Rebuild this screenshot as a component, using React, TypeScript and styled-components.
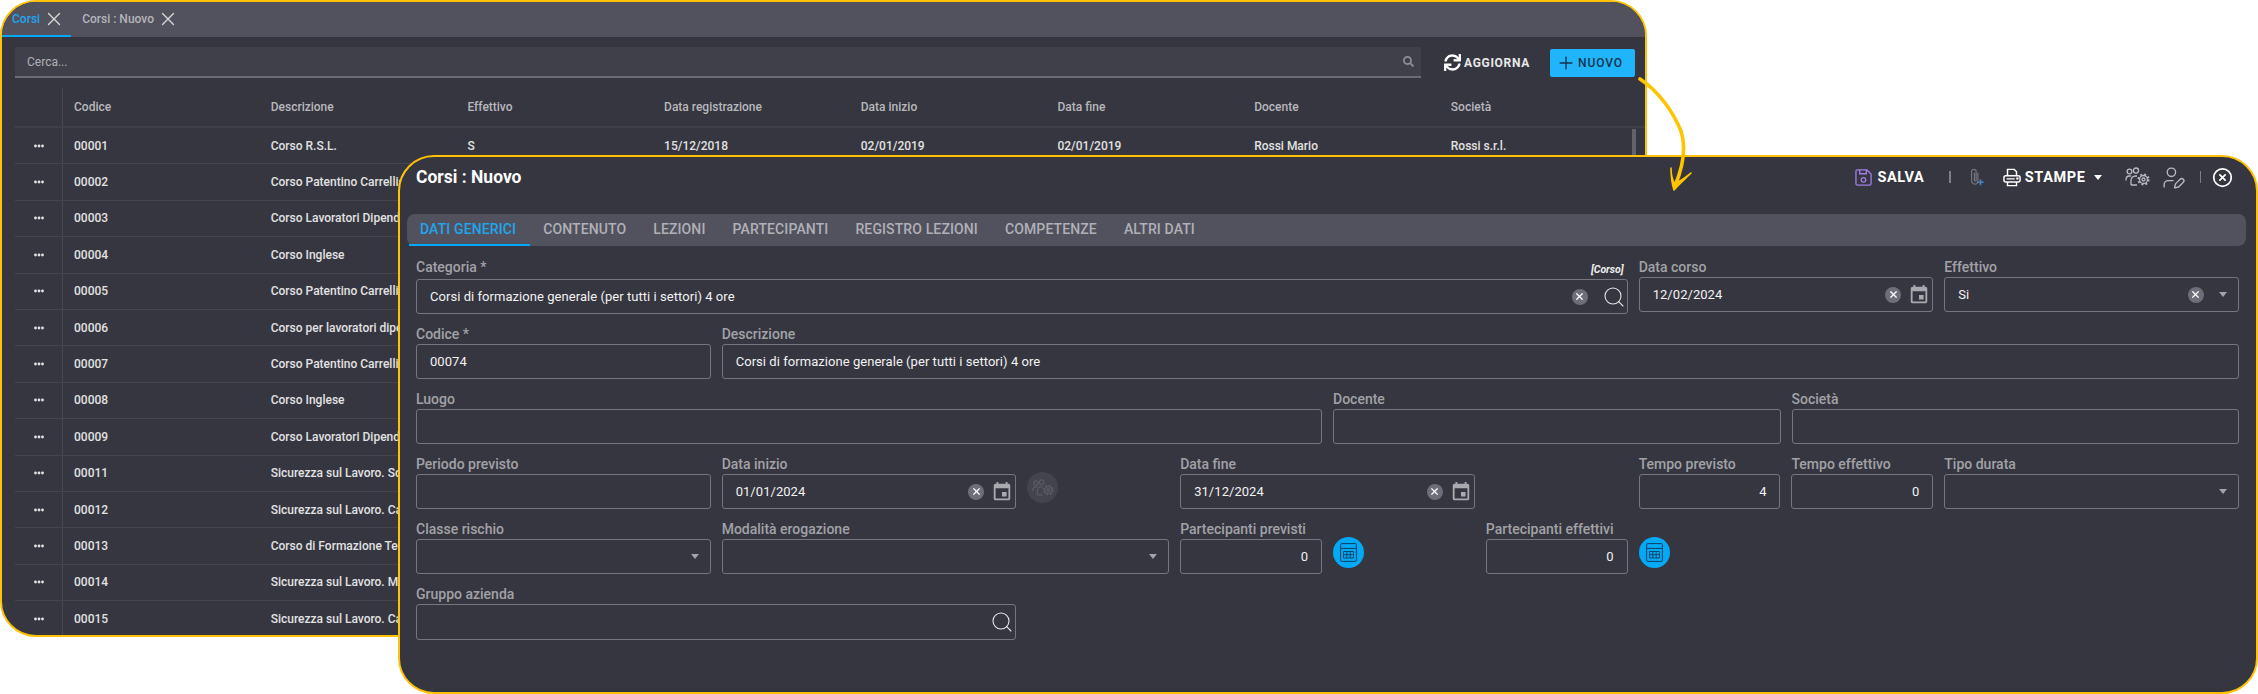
import React from 'react'
import styled, { createGlobalStyle } from 'styled-components'
import { Search, X, UserPen, CircleX, Plus } from 'lucide-react'
import { FaSync, FaSearch } from 'react-icons/fa'
import { MdEvent } from 'react-icons/md'

const Global = createGlobalStyle`
  html, body { margin: 0; padding: 0; background: #fff; }
  body { font-family: Roboto, "Liberation Sans", sans-serif; }
`

const columns = ['Codice', 'Descrizione', 'Effettivo', 'Data registrazione', 'Data inizio', 'Data fine', 'Docente', 'Società']

const firstRow = ['00001', 'Corso R.S.L.', 'S', '15/12/2018', '02/01/2019', '02/01/2019', 'Rossi Mario', 'Rossi s.r.l.']

// the form window covers these rows, only the start of each description shows
const rows = [
  ['00002', 'Corso Patentino Carrellis'],
  ['00003', 'Corso Lavoratori Dipende'],
  ['00004', 'Corso Inglese'],
  ['00005', 'Corso Patentino Carrellis'],
  ['00006', 'Corso per lavoratori dipe'],
  ['00007', 'Corso Patentino Carrellis'],
  ['00008', 'Corso Inglese'],
  ['00009', 'Corso Lavoratori Dipende'],
  ['00011', 'Sicurezza sul Lavoro. Sc'],
  ['00012', 'Sicurezza sul Lavoro. Ca'],
  ['00013', 'Corso di Formazione Tec'],
  ['00014', 'Sicurezza sul Lavoro. Mo'],
  ['00015', 'Sicurezza sul Lavoro. Ca'],
]

const formTabs = ['DATI GENERICI', 'CONTENUTO', 'LEZIONI', 'PARTECIPANTI', 'REGISTRO LEZIONI', 'COMPETENZE', 'ALTRI DATI']

const Dots = () => (
  <svg width="10" height="4" viewBox="0 0 10 4">
    <circle cx="1.5" cy="2" r="1.4" fill="#e4e4e4" />
    <circle cx="5" cy="2" r="1.4" fill="#e4e4e4" />
    <circle cx="8.5" cy="2" r="1.4" fill="#e4e4e4" />
  </svg>
)

const FloppyIcon = () => (
  <svg width="17" height="17" viewBox="0 0 18 18" fill="none" stroke="#a07ee6" strokeWidth="1.4">
    <path d="M2.5 1h10.2L17 5.3v10.2a1.5 1.5 0 0 1-1.5 1.5h-13A1.5 1.5 0 0 1 1 15.5v-13A1.5 1.5 0 0 1 2.5 1z" />
    <path d="M5 1v4h7V1" />
    <circle cx="9" cy="11.5" r="2.4" />
  </svg>
)

const ClipIcon = () => (
  <svg width="14" height="18" viewBox="0 0 16 20" fill="none" strokeWidth="1.4">
    <path stroke="#74747c" d="M9 5v9.5a3.6 3.6 0 0 1-7.2 0V3.8a2.6 2.6 0 0 1 5.2 0v10a1 1 0 0 1-2 0V5" />
    <path stroke="#4a86c0" strokeWidth="1.7" d="M8.5 16h7M12 12.5v7" />
  </svg>
)

const PrinterIcon = () => (
  <svg width="18" height="19" viewBox="0 0 20 20" fill="none" stroke="#fff" strokeWidth="1.6">
    <path d="M5 8V1h7.5L15 3.5V8" />
    <rect x="1" y="8" width="18" height="7" rx="2.2" />
    <path d="M5 15v4h10v-4M4 11.5h9" />
    <circle cx="16" cy="11" r=".6" fill="#fff" />
  </svg>
)

const TeamGearIcon = ({ color = '#b9b9bf', size = 25 }: { color?: string; size?: number }) => (
  <svg width={size} height={size * 0.8} viewBox="0 0 25 20" fill="none" stroke={color} strokeWidth="1.3">
    <circle cx="4.5" cy="4.5" r="2.4" />
    <path d="M1 13.5v-1.2A3.4 3.4 0 0 1 4.4 9h1.8" />
    <circle cx="11" cy="3.6" r="2.6" />
    <path d="M6 18v-4.5a4.5 4.5 0 0 1 4.5-4.5H12M6 18h6" />
    <circle cx="18.5" cy="12.5" r="4" />
    <circle cx="18.5" cy="12.5" r="5.2" strokeWidth="1.8" strokeDasharray="1.9 2.2" />
    <circle cx="18.5" cy="12.5" r="1.5" />
  </svg>
)

const CalcIcon = () => (
  <svg width="17" height="19" viewBox="0 0 17 19" fill="none" stroke="#0b3f63" strokeWidth="1">
    <rect x=".6" y=".6" width="15.8" height="17.8" rx="1.2" />
    <path d="M.6 5.4h15.8" />
    <path strokeWidth=".9" d="M3.5 8.5h10v6.5h-10zM3.5 11.7h10M6.8 8.5v6.5M10.2 8.5v6.5" />
  </svg>
)

const ArrowDrawing = () => (
  <Arrow width="70" height="125" viewBox="0 0 70 125" fill="none">
    <path d="M2 3C22 16 36 38 43 55C48 70 46 88 37 110" stroke="#ffc400" strokeWidth="3.6" strokeLinecap="round" />
    <path d="M33 92C33 98 34 104 37 108C42 105 48 101 53 97C47 103 41 108 36 114C34 108 33 100 33 92Z" fill="#ffc400" stroke="#ffc400" strokeWidth="1.6" strokeLinejoin="round" />
  </Arrow>
)

type FieldProps = {
  label: string
  value?: string
  start: number
  span: number
  kind?: 'date' | 'select' | 'search'
  clear?: boolean
  numeric?: boolean
  tag?: string
  tall?: boolean
}

const Field = ({ label, value, start, span, kind, clear, numeric, tag, tall }: FieldProps) => (
  <FieldWrap $start={start} $span={span}>
    <LabelRow $tall={!!tag}>
      <Label>{label}</Label>
      {tag && <Tag>{tag}</Tag>}
    </LabelRow>
    <InputBox $kind={kind} $tall={tall}>
      <Value $numeric={numeric}>{value}</Value>
      {clear && (
        <Clear $kind={kind}>
          <X size={11} strokeWidth={2.6} color="#fff" />
        </Clear>
      )}
      {kind === 'date' && <MdEvent size={22} color="#a9a9ae" />}
      {kind === 'select' && <Caret />}
      {kind === 'search' && <Search size={24} strokeWidth={1.1} color="#e6e6e6" />}
    </InputBox>
  </FieldWrap>
)

export default function App() {
  return (
    <Page>
      <Global />
      <BackWindow>
        <TabStrip>
          <WindowTab $active>
            Corsi
            <X size={22} strokeWidth={1.5} color="#d8d8d8" />
          </WindowTab>
          <WindowTab>
            Corsi : Nuovo
            <X size={22} strokeWidth={1.5} color="#d8d8d8" />
          </WindowTab>
        </TabStrip>
        <Toolbar>
          <SearchBar>
            Cerca...
            <FaSearch size={11} color="#8e8e94" />
          </SearchBar>
          <RefreshButton>
            <FaSync size={17} color="#fff" />
            AGGIORNA
          </RefreshButton>
          <NewButton>
            <Plus size={20} strokeWidth={1.7} color="#12344d" />
            NUOVO
          </NewButton>
        </Toolbar>
        <Table>
          <Scrollbar />
          <HeadRow>
            <MenuCell />
            {columns.map(c => (
              <HeadCell key={c}>{c}</HeadCell>
            ))}
          </HeadRow>
          <Row>
            <MenuCell>
              <Dots />
            </MenuCell>
            {firstRow.map((c, i) => (
              <Cell key={i}>{c}</Cell>
            ))}
          </Row>
          {rows.map(r => (
            <Row key={r[0]}>
              <MenuCell>
                <Dots />
              </MenuCell>
              <Cell>{r[0]}</Cell>
              <Cell>{r[1]}</Cell>
            </Row>
          ))}
        </Table>
      </BackWindow>

      <FrontWindow>
        <Header>
          <Title>Corsi : Nuovo</Title>
          <Actions>
            <ActionText>
              <FloppyIcon />
              SALVA
            </ActionText>
            <Divider $space={25} />
            <IconSlot $space={19}>
              <ClipIcon />
            </IconSlot>
            <ActionText $space={19} $tight>
              <PrinterIcon />
              STAMPE
            </ActionText>
            <HeadCaret />
            <IconSlot $space={23}>
              <TeamGearIcon />
            </IconSlot>
            <IconSlot $space={11}>
              <UserPen size={25} strokeWidth={1.3} color="#b9b9bf" />
            </IconSlot>
            <Divider $space={14} />
            <IconSlot $space={11}>
              <CircleX size={21} strokeWidth={2} color="#fff" />
            </IconSlot>
          </Actions>
        </Header>

        <FormTabs>
          {formTabs.map((t, i) => (
            <FormTab key={t} $active={i === 0}>
              {t}
            </FormTab>
          ))}
        </FormTabs>

        <Form>
          <FormRow>
            <Field label="Categoria *" tag="[Corso]" value="Corsi di formazione generale (per tutti i settori) 4 ore" start={1} span={8} kind="search" clear />
            <Field label="Data corso" value="12/02/2024" start={9} span={2} kind="date" clear />
            <Field label="Effettivo" value="Si" start={11} span={2} kind="select" clear />
          </FormRow>
          <FormRow>
            <Field label="Codice *" value="00074" start={1} span={2} />
            <Field label="Descrizione" value="Corsi di formazione generale (per tutti i settori) 4 ore" start={3} span={10} />
          </FormRow>
          <FormRow>
            <Field label="Luogo" start={1} span={6} />
            <Field label="Docente" start={7} span={3} />
            <Field label="Società" start={10} span={3} />
          </FormRow>
          <FormRow>
            <Field label="Periodo previsto" start={1} span={2} />
            <Field label="Data inizio" value="01/01/2024" start={3} span={2} kind="date" clear />
            <RoundButton $start={5} $disabled>
              <TeamGearIcon color="#5c5c66" size={22} />
            </RoundButton>
            <Field label="Data fine" value="31/12/2024" start={6} span={2} kind="date" clear />
            <Field label="Tempo previsto" value="4" start={9} span={1} numeric />
            <Field label="Tempo effettivo" value="0" start={10} span={1} numeric />
            <Field label="Tipo durata" start={11} span={2} kind="select" />
          </FormRow>
          <FormRow>
            <Field label="Classe rischio" start={1} span={2} kind="select" />
            <Field label="Modalità erogazione" start={3} span={3} kind="select" />
            <Field label="Partecipanti previsti" value="0" start={6} span={1} numeric />
            <RoundButton $start={7}>
              <CalcIcon />
            </RoundButton>
            <Field label="Partecipanti effettivi" value="0" start={8} span={1} numeric />
            <RoundButton $start={9}>
              <CalcIcon />
            </RoundButton>
          </FormRow>
          <FormRow>
            <Field label="Gruppo azienda" start={1} span={4} kind="search" tall />
          </FormRow>
        </Form>
      </FrontWindow>
      <ArrowDrawing />
    </Page>
  )
}

const Page = styled.div`
  position: relative;
  width: 2258px;
  height: 694px;
  overflow: hidden;
  background: #fff;
`

const BackWindow = styled.div`
  position: absolute;
  left: 0;
  top: 0;
  width: 1647px;
  height: 637px;
  box-sizing: border-box;
  border: 2px solid #ffc107;
  border-radius: 36px;
  background: #363640;
  overflow: hidden;
  display: flex;
  flex-direction: column;
`

const TabStrip = styled.div`
  height: 35px;
  flex: none;
  display: flex;
  background: #52525f;
`

const WindowTab = styled.div<{ $active?: boolean }>`
  display: flex;
  align-items: center;
  gap: 3px;
  height: 35px;
  box-sizing: border-box;
  padding: 0 6px 0 ${p => (p.$active ? '10px' : '11px')};
  font-size: 12px;
  font-weight: 500;
  color: ${p => (p.$active ? '#1fa5ee' : '#b4b4ba')};
  border-bottom: 2px solid ${p => (p.$active ? '#03a9f4' : 'transparent')};
`

const Toolbar = styled.div`
  display: flex;
  align-items: center;
  padding: 10px 10px 0 13px;
  flex: none;
`

const SearchBar = styled.div`
  flex: 1;
  height: 31px;
  box-sizing: border-box;
  display: flex;
  align-items: center;
  justify-content: space-between;
  padding: 0 7px 0 12px;
  background: #40404a;
  border-bottom: 2px solid #6c6c72;
  font-size: 12px;
  color: #b0b0b5;
`

const RefreshButton = styled.div`
  display: flex;
  align-items: center;
  gap: 3px;
  margin-left: 23px;
  font-size: 12px;
  font-weight: 700;
  letter-spacing: 0.7px;
  color: #e8e8e8;
`

const NewButton = styled.div`
  display: flex;
  align-items: center;
  gap: 2px;
  margin-left: 20px;
  width: 85px;
  height: 28px;
  box-sizing: border-box;
  padding-left: 6px;
  border-radius: 2px;
  background: #20b4fb;
  font-size: 12px;
  font-weight: 500;
  letter-spacing: 0.9px;
  color: #12344d;
`

const Table = styled.div`
  position: relative;
  margin: 10px 0 0 13px;
  flex: 1;
  min-height: 0;
`

const Scrollbar = styled.div`
  position: absolute;
  left: 1617px;
  top: 41px;
  width: 4px;
  height: 120px;
  background: #62626a;
`

const HeadRow = styled.div`
  display: flex;
  height: 38px;
  border-bottom: 2px solid #414049;
  color: #b8b8bc;
`

const Row = styled.div`
  display: flex;
  height: 36.4px;
  box-sizing: border-box;
  border-bottom: 1.5px solid #45454f;
  color: #e2e2e2;
`

const MenuCell = styled.div`
  width: 48px;
  flex: none;
  box-sizing: border-box;
  display: flex;
  align-items: center;
  justify-content: center;
  border-right: 1.5px solid #494952;
`

const HeadCell = styled.div`
  width: 196.7px;
  flex: none;
  box-sizing: border-box;
  padding-left: 11px;
  display: flex;
  align-items: center;
  font-size: 12px;
  font-weight: 500;
  white-space: nowrap;
`

const Cell = styled(HeadCell)``

const FrontWindow = styled.div`
  position: absolute;
  left: 398px;
  top: 155px;
  width: 1860px;
  height: 539px;
  box-sizing: border-box;
  border: 2px solid #ffc107;
  border-radius: 36px;
  background: #363640;
  overflow: hidden;
`

const Header = styled.div`
  height: 57px;
  box-sizing: border-box;
  padding: 0 23px 17px 16px;
  display: flex;
  align-items: center;
  justify-content: space-between;
`

const Title = styled.div`
  font-size: 17.5px;
  font-weight: 700;
  color: #fff;
`

const Actions = styled.div`
  display: flex;
  align-items: center;
`

const ActionText = styled.div<{ $space?: number; $tight?: boolean }>`
  display: flex;
  align-items: center;
  gap: ${p => (p.$tight ? 4 : 5)}px;
  margin-left: ${p => p.$space ?? 0}px;
  font-size: 14.5px;
  font-weight: 700;
  letter-spacing: 0.6px;
  color: #fff;
`

const Divider = styled.div<{ $space: number }>`
  width: 1.5px;
  height: 12px;
  margin-left: ${p => p.$space}px;
  background: #7b7f88;
`

const IconSlot = styled.div<{ $space: number }>`
  display: flex;
  margin-left: ${p => p.$space}px;
`

const HeadCaret = styled.div`
  width: 0;
  height: 0;
  margin-left: 8px;
  border-left: 4.5px solid transparent;
  border-right: 4.5px solid transparent;
  border-top: 5px solid #fff;
`

const FormTabs = styled.div`
  height: 32px;
  margin: 0 10px 0 7px;
  padding-left: 2px;
  display: flex;
  border-radius: 8px;
  background: #52525f;
`

const FormTab = styled.div<{ $active?: boolean }>`
  height: 32px;
  box-sizing: border-box;
  padding: 0 13.5px;
  padding-left: ${p => (p.$active ? '11px' : '13.5px')};
  display: flex;
  align-items: center;
  font-size: 14px;
  font-weight: 500;
  letter-spacing: 0.12px;
  color: ${p => (p.$active ? '#1fa5ee' : '#b0b0b6')};
  border-bottom: 2px solid ${p => (p.$active ? '#03a9f4' : 'transparent')};
`

const Form = styled.div`
  padding: 13px 17px 0 16px;
  display: flex;
  flex-direction: column;
  gap: 12px;
`

const FormRow = styled.div`
  display: grid;
  grid-template-columns: repeat(12, 1fr);
  column-gap: 11px;
  align-items: start;
`

const FieldWrap = styled.div<{ $start: number; $span: number }>`
  grid-column: ${p => p.$start} / span ${p => p.$span};
  min-width: 0;
`

const LabelRow = styled.div<{ $tall: boolean }>`
  height: ${p => (p.$tall ? 20 : 18)}px;
  display: flex;
  justify-content: space-between;
  align-items: flex-start;
`

const Label = styled.div`
  font-size: 14px;
  line-height: 16px;
  font-weight: 500;
  color: #a2a2a6;
  white-space: nowrap;
`

const Tag = styled.div`
  margin: 4px 4px 0 0;
  font-size: 10.5px;
  font-style: italic;
  font-weight: 700;
  color: #eee;
`

const InputBox = styled.div<{ $kind?: string; $tall?: boolean }>`
  height: ${p => (p.$tall ? 36 : 35)}px;
  box-sizing: border-box;
  display: flex;
  align-items: center;
  padding: 0 ${p => (p.$kind === 'select' ? 11 : p.$kind === 'search' ? 1 : p.$kind ? 2 : 13)}px 0 13px;
  border: 1.5px solid #76767e;
  border-radius: 3px;
`

const Value = styled.div<{ $numeric?: boolean }>`
  flex: 1;
  min-width: 0;
  font-size: 13px;
  font-weight: 400;
  letter-spacing: 0.05px;
  color: #f2f2f2;
  white-space: nowrap;
  text-align: ${p => (p.$numeric ? 'right' : 'left')};
`

const Clear = styled.div<{ $kind?: string }>`
  width: 16px;
  height: 16px;
  flex: none;
  display: flex;
  align-items: center;
  justify-content: center;
  margin-right: ${p => (p.$kind === 'date' ? 7 : p.$kind === 'select' ? 15 : 14)}px;
  border-radius: 50%;
  background: #6e6e7a;
`

const Caret = styled.div`
  width: 0;
  height: 0;
  border-left: 4px solid transparent;
  border-right: 4px solid transparent;
  border-top: 5px solid #a4a4a8;
`

const RoundButton = styled.div<{ $start: number; $disabled?: boolean }>`
  grid-column: ${p => p.$start};
  align-self: end;
  justify-self: start;
  width: 31px;
  height: 31px;
  margin-bottom: 6px;
  display: flex;
  align-items: center;
  justify-content: center;
  border-radius: 50%;
  background: ${p => (p.$disabled ? '#44444e' : '#03a9f4')};
`

const Arrow = styled.svg`
  position: absolute;
  left: 1638px;
  top: 76px;
`
